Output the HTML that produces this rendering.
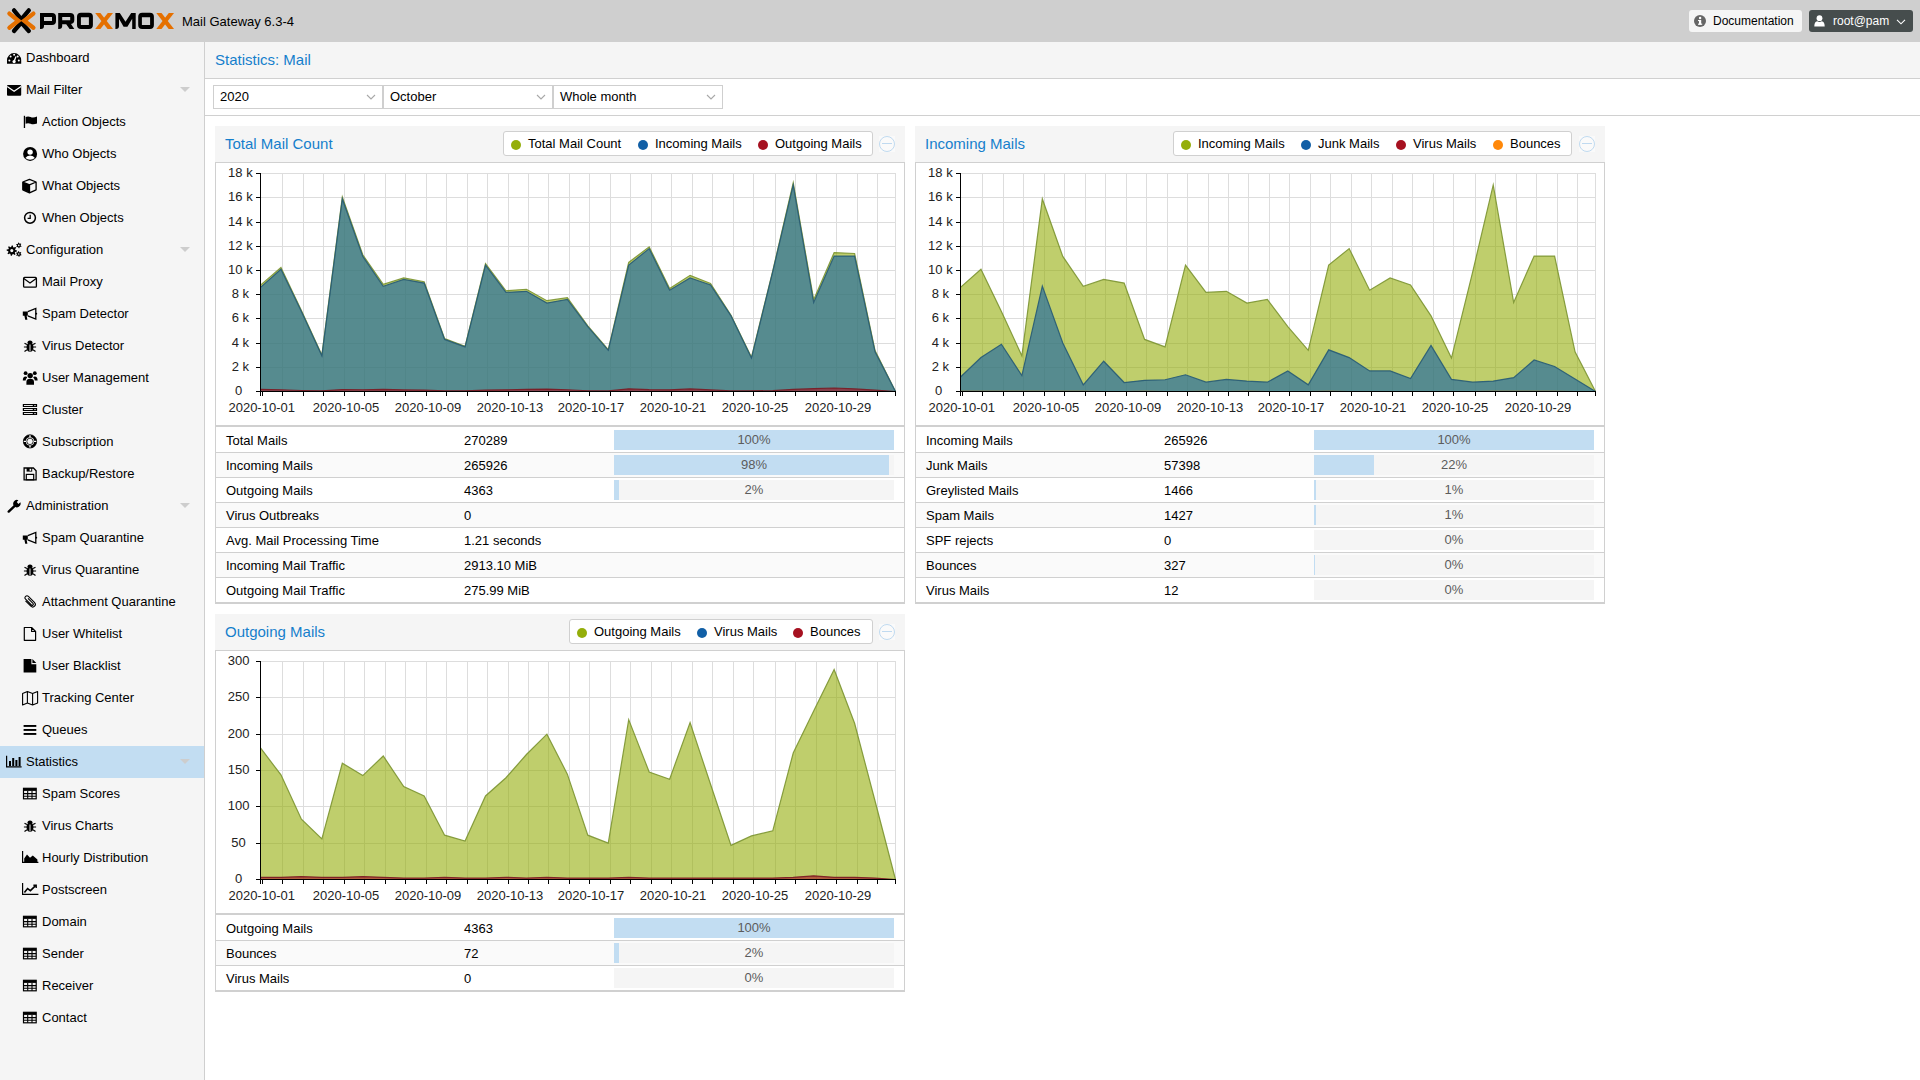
<!DOCTYPE html><html><head><meta charset="utf-8"><style>
*{box-sizing:border-box;margin:0;padding:0}
body{width:1920px;height:1080px;overflow:hidden;background:#fff;font-family:"Liberation Sans",sans-serif;font-size:13px;color:#000;position:relative}
.abs{position:absolute}
#hdr{left:0;top:0;width:1920px;height:42px;background:#cfcfcf}
#nav{left:0;top:42px;width:205px;height:1038px;background:#f5f5f5;border-right:1px solid #cfcfcf}
.ni{position:absolute;left:0;width:204px;height:32px;line-height:32px;white-space:nowrap}
.ni.sel{background:#c2ddf2}
.ni .t{position:absolute;top:0}
.ni svg{position:absolute}
.chev{position:absolute;left:180px;top:13px;width:0;height:0;border-left:5px solid transparent;border-right:5px solid transparent;border-top:5px solid #cdcdcd}
#ttl{left:205px;top:42px;width:1715px;height:37px;background:#f5f5f5;border-bottom:1px solid #d0d0d0}
#ttl span{position:absolute;left:10px;top:9px;color:#157fcc;font-size:15px;line-height:18px}
#tb{left:205px;top:79px;width:1715px;height:37px;background:#fff;border-bottom:1px solid #d0d0d0}
.combo{position:absolute;top:6px;width:170px;height:24px;border:1px solid #cfcfcf;background:#fff}
.combo span{position:absolute;left:6px;top:3px;line-height:15px}
.combo svg{position:absolute;right:6px;top:7.5px}
.pnl{position:absolute;width:690px;background:#fff}
.ph{position:absolute;left:0;top:0;width:690px;height:36px;background:#f5f5f5}
.ph .pt{position:absolute;left:10px;top:9px;color:#157fcc;font-size:15px;line-height:18px;white-space:nowrap}
.leg{position:absolute;top:5px;height:25px;background:#fff;border:1px solid #d0d0d0;border-radius:3px;white-space:nowrap}
.leg .it{position:absolute;top:4px;line-height:15px}
.leg .dot{position:absolute;top:4px;width:10px;height:10px;border-radius:50%}
.tool{position:absolute;top:10px;width:16px;height:16px;border:1px solid #c0daf0;border-radius:50%}
.tool:after{content:"";position:absolute;left:2px;top:6px;width:10px;height:1px;background:#c0daf0}
.toolbg{position:absolute;top:10px;width:16px;height:16px;background:#fafafa}
.pb{position:absolute;left:0;top:36px;width:690px;border:1px solid #d0d0d0}
.row{position:absolute;left:1px;width:688px;height:25px;border-bottom:1px solid #d0d0d0}
.row.alt{background:#fafafa}
.row .c1{position:absolute;left:10px;top:5px;line-height:15px}
.row .c2{position:absolute;left:248px;top:5px;line-height:15px}
.bar{position:absolute;left:398px;top:2px;width:280px;height:20px;background:#f5f5f5}
.bar .f{position:absolute;left:0;top:0;height:20px;background:#c2ddf2}
.bar .tx{position:absolute;left:0;top:2px;width:280px;text-align:center;line-height:15px;color:#5c5c5c}
</style></head><body><div id="hdr" class="abs"><svg class="abs" style="left:0;top:0" width="180" height="42" viewBox="0 0 180 42">
<g fill="none" stroke-linecap="round" stroke-linejoin="miter" stroke-width="4.3">
<path d="M14 10.4 L21.3 19.3 L28.8 10.4" stroke="#000"/>
<path d="M14 31 L21.3 22.6 L28.8 31" stroke="#000"/>
<path d="M9.4 13.6 L18.4 20.8 L9.4 27.8" stroke="#e57000"/>
<path d="M33.4 13.6 L24.2 20.8 L33.4 27.8" stroke="#e57000"/>
</g>
<g fill="#000" fill-rule="evenodd">
<path d="M40 13 H52 Q56 13 56 17 V21 Q56 25 52 25 H44 V26 Q44 29 41 29 H40 Z M44 17 V21 H52 V17 Z"/>
<path d="M58.2 13 H70.2 Q74.3 13 74.3 17 V20 Q74.3 23.6 71 24 L74.3 28.9 H69.6 L66.2 24.2 H62.2 V26 Q62.2 29 59 29 H58.2 Z M62.2 17 V20.2 H70.2 V17 Z"/>
<path d="M81 12.8 H88.9 Q92.9 12.8 92.9 16.8 V25 Q92.9 29 88.9 29 H81 Q77 29 77 25 V16.8 Q77 12.8 81 12.8 Z M80.9 17.2 V25 H88.9 V17.2 Z"/>
<path d="M115.4 29 V12.9 H119.8 L125.5 21.8 L131.2 12.9 H135.7 V29 H132.2 V18.8 L127.4 26.8 H123.6 L119 18.8 V26 Q119 29 116 29 Z"/>
<path d="M142.2 12.8 H149.9 Q153.9 12.8 153.9 16.8 V25 Q153.9 29 149.9 29 H142.2 Q138.2 29 138.2 25 V16.8 Q138.2 12.8 142.2 12.8 Z M141.9 17.3 V25 H150.1 V17.3 Z"/>
</g>
<g fill="#e57000">
<path d="M95.2 12.9 H100.4 L113 28.9 H107.6 Z"/>
<path d="M107.8 12.9 H113 L100.4 28.9 H95.2 Z"/>
<path d="M156.3 12.9 H161.5 L174 28.9 H168.7 Z"/>
<path d="M168.8 12.9 H174 L161.5 28.9 H156.3 Z"/>
</g></svg><span class="abs" style="left:182px;top:14px;font-size:13px;line-height:16px;color:#000">Mail Gateway 6.3-4</span><div class="abs" style="left:1689px;top:10px;width:113px;height:22px;background:#f5f5f5;border-radius:3px"><svg class="abs" style="left:5px;top:5px" width="12" height="12" viewBox="0 0 12 12"><circle cx="6" cy="6" r="6" fill="#666"/><rect x="5" y="5" width="2.2" height="4.5" fill="#fff"/><rect x="4" y="8.6" width="4.2" height="1.2" fill="#fff"/><rect x="4" y="5" width="1.5" height="1.1" fill="#fff"/><circle cx="6.1" cy="3" r="1.2" fill="#fff"/></svg><span class="abs" style="left:24px;top:4px;font-size:12px;line-height:14px;color:#000">Documentation</span></div><div class="abs" style="left:1809px;top:10px;width:104px;height:22px;background:#464d4d;border-radius:3px"><svg class="abs" style="left:5px;top:5px" width="12" height="12" viewBox="0 0 12 12"><circle cx="5.5" cy="3.2" r="2.9" fill="#fff"/><path d="M0.3 11.5 Q0.3 6.6 3.2 6.2 Q5.5 7.6 7.8 6.2 Q10.7 6.6 10.7 11.5 Z" fill="#fff"/></svg><span class="abs" style="left:24px;top:4px;font-size:12px;line-height:14px;color:#fff">root@pam</span><svg class="abs" style="left:87px;top:9px" width="10" height="6" viewBox="0 0 10 6"><path d="M1 0.8 L5 4.8 L9 0.8" fill="none" stroke="#fff" stroke-width="1.1"/></svg></div></div><div id="nav" class="abs"><div class="ni" style="top:0px"><svg style="left:6px;top:8px" width="17" height="16" viewBox="0 0 17 16"><path d="M1,13.8 V10.2 A7.1,7.1 0 0 1 15.2,10.2 V13.8 Z" fill="#000"/><g fill="#fff"><circle cx="3.4" cy="10.6" r="1"/><circle cx="4.6" cy="6.4" r="1"/><circle cx="8.1" cy="4.7" r="1"/><circle cx="11.7" cy="6.4" r="1"/><circle cx="12.8" cy="10.6" r="1"/><circle cx="8.1" cy="11.6" r="1.6"/></g><path d="M8.1,11.6 L10,6.6" stroke="#fff" stroke-width="1.3"/></svg><span class="t" style="left:26px">Dashboard</span></div><div class="ni" style="top:32px"><svg style="left:6px;top:8px" width="17" height="16" viewBox="0 0 17 16"><rect x="1" y="3" width="14.2" height="10.8" rx="1" fill="#000"/><path d="M1.2,4.6 L8.1,9.2 L15,4.6" fill="none" stroke="#fff" stroke-width="1.2"/></svg><span class="t" style="left:26px">Mail Filter</span><div class="chev"></div></div><div class="ni" style="top:64px"><svg style="left:22px;top:8px" width="17" height="16" viewBox="0 0 17 16"><rect x="1.8" y="1.8" width="1.3" height="12.2" fill="#000"/><path d="M3.6,3 Q6,1.8 8.6,3 Q11.2,4.2 15,2.6 V9.6 Q11.2,11 8.6,9.8 Q6,8.6 3.6,9.8 Z" fill="#000"/></svg><span class="t" style="left:42px">Action Objects</span></div><div class="ni" style="top:96px"><svg style="left:22px;top:8px" width="17" height="16" viewBox="0 0 17 16"><circle cx="8.1" cy="7.9" r="7" fill="#000"/><circle cx="8.1" cy="6.1" r="2.7" fill="#fff"/><path d="M3.4,11.9 Q4.6,9.4 8.1,9.4 Q11.6,9.4 12.8,11.9 Q11,13.7 8.1,13.7 Q5.2,13.7 3.4,11.9 Z" fill="#fff"/></svg><span class="t" style="left:42px">Who Objects</span></div><div class="ni" style="top:128px"><svg style="left:22px;top:8px" width="17" height="16" viewBox="0 0 17 16"><path d="M0.8,4 L7.5,6.8 L7.5,14.8 L0.8,11.8 Z" fill="#000"/><path d="M7.5,1.4 L14.1,4 L14.1,11.8 L7.5,14.8 L0.8,11.8 L0.8,4 Z M0.8,4 L7.5,6.8 L14.1,4 M7.5,6.8 V14.8" fill="none" stroke="#000" stroke-width="1.3" stroke-linejoin="round"/></svg><span class="t" style="left:42px">What Objects</span></div><div class="ni" style="top:160px"><svg style="left:22px;top:8px" width="17" height="16" viewBox="0 0 17 16"><circle cx="8" cy="7.8" r="5.4" fill="none" stroke="#000" stroke-width="1.5"/><path d="M8.2,4.8 V8.4 H5.6" fill="none" stroke="#000" stroke-width="1.3"/></svg><span class="t" style="left:42px">When Objects</span></div><div class="ni" style="top:192px"><svg style="left:6px;top:8px" width="17" height="16" viewBox="0 0 17 16"><path fill="#000" fill-rule="evenodd" d="M11.00,8.60 L10.90,9.61 L9.13,9.98 L8.79,10.60 L9.48,12.28 L8.69,12.92 L7.18,11.93 L6.50,12.13 L5.80,13.80 L4.79,13.70 L4.42,11.93 L3.80,11.59 L2.12,12.28 L1.48,11.49 L2.47,9.98 L2.27,9.30 L0.60,8.60 L0.70,7.59 L2.47,7.22 L2.81,6.60 L2.12,4.92 L2.91,4.28 L4.42,5.27 L5.10,5.07 L5.80,3.40 L6.81,3.50 L7.18,5.27 L7.80,5.61 L9.48,4.92 L10.12,5.71 L9.13,7.22 L9.33,7.90 Z M4.20,8.60 a1.60,1.60 0 1,0 3.20,0 a1.60,1.60 0 1,0 -3.20,0 Z"/><path fill="#000" fill-rule="evenodd" d="M15.47,4.23 L15.17,4.89 L14.09,4.79 L13.69,5.08 L13.42,6.13 L12.69,6.20 L12.24,5.22 L11.79,5.01 L10.75,5.30 L10.32,4.71 L10.95,3.82 L10.90,3.33 L10.13,2.57 L10.43,1.91 L11.51,2.01 L11.91,1.72 L12.18,0.67 L12.91,0.60 L13.36,1.58 L13.81,1.79 L14.85,1.50 L15.28,2.09 L14.65,2.98 L14.70,3.47 Z M12.00,3.40 a0.80,0.80 0 1,0 1.60,0 a0.80,0.80 0 1,0 -1.60,0 Z"/><path fill="#000" fill-rule="evenodd" d="M15.47,12.83 L15.17,13.49 L14.09,13.39 L13.69,13.68 L13.42,14.73 L12.69,14.80 L12.24,13.82 L11.79,13.61 L10.75,13.90 L10.32,13.31 L10.95,12.42 L10.90,11.93 L10.13,11.17 L10.43,10.51 L11.51,10.61 L11.91,10.32 L12.18,9.27 L12.91,9.20 L13.36,10.18 L13.81,10.39 L14.85,10.10 L15.28,10.69 L14.65,11.58 L14.70,12.07 Z M12.00,12.00 a0.80,0.80 0 1,0 1.60,0 a0.80,0.80 0 1,0 -1.60,0 Z"/></svg><span class="t" style="left:26px">Configuration</span><div class="chev"></div></div><div class="ni" style="top:224px"><svg style="left:22px;top:8px" width="17" height="16" viewBox="0 0 17 16"><rect x="1.6" y="3.4" width="12.8" height="9.8" rx="1" fill="none" stroke="#000" stroke-width="1.3"/><path d="M1.8,4.4 L8,9 L14.2,4.4" fill="none" stroke="#000" stroke-width="1.2"/></svg><span class="t" style="left:42px">Mail Proxy</span></div><div class="ni" style="top:256px"><svg style="left:22px;top:8px" width="17" height="16" viewBox="0 0 17 16"><path d="M0.8,5.4 H5.8 V9.8 H4.6 L5.4,13.8 H3.2 L2.4,9.8 H0.8 Z" fill="#000"/><path d="M5.8,5.6 L13.8,2.4 V13 L5.8,9.8" fill="none" stroke="#000" stroke-width="1.3"/><circle cx="14.3" cy="7.7" r="0.9" fill="#000"/></svg><span class="t" style="left:42px">Spam Detector</span></div><div class="ni" style="top:288px"><svg style="left:22px;top:8px" width="17" height="16" viewBox="0 0 17 16"><ellipse cx="8" cy="9.2" rx="3.4" ry="4.6" fill="#000"/><path d="M5.4,5 A2.6,2.6 0 0 1 10.6,5 Z" fill="#000"/><path d="M1.9,9 H14.1 M2.5,5.2 L5,6.6 M13.5,5.2 L11,6.6 M2.5,13.6 L5,11.8 M13.5,13.6 L11,11.8" stroke="#000" stroke-width="1.2"/><path d="M8,6.5 V13.2" stroke="#fff" stroke-width="0.9"/></svg><span class="t" style="left:42px">Virus Detector</span></div><div class="ni" style="top:320px"><svg style="left:22px;top:8px" width="17" height="16" viewBox="0 0 17 16"><circle cx="8.2" cy="5.6" r="2.7" fill="#000"/><path d="M4.4,14.7 V12 Q4.4,8.8 8.2,8.8 Q12,8.8 12,12 V14.7 Z" fill="#000"/><circle cx="3.6" cy="3.2" r="1.9" fill="#000"/><circle cx="12.8" cy="3.2" r="1.9" fill="#000"/><path d="M0.8,10.5 Q0.8,6.6 3.6,6.6 Q4.8,6.6 5.2,7.4 Q3.6,8.6 3.6,10.5 Z M15.6,10.5 Q15.6,6.6 12.8,6.6 Q11.6,6.6 11.2,7.4 Q12.8,8.6 12.8,10.5 Z" fill="#000"/></svg><span class="t" style="left:42px">User Management</span></div><div class="ni" style="top:352px"><svg style="left:22px;top:8px" width="17" height="16" viewBox="0 0 17 16"><g fill="#000"><rect x="0.8" y="2" width="14.3" height="3" /><rect x="0.8" y="6" width="14.3" height="3"/><rect x="0.8" y="10" width="14.3" height="3"/></g><g fill="#fff"><rect x="2" y="3.1" width="8.8" height="0.9"/><rect x="2" y="7.1" width="8.8" height="0.9"/><rect x="2" y="11.1" width="8.8" height="0.9"/><rect x="12.4" y="3" width="1.2" height="1.1"/><rect x="12.4" y="7" width="1.2" height="1.1"/><rect x="12.4" y="11" width="1.2" height="1.1"/></g></svg><span class="t" style="left:42px">Cluster</span></div><div class="ni" style="top:384px"><svg style="left:22px;top:8px" width="17" height="16" viewBox="0 0 17 16"><circle cx="8" cy="7.4" r="5.4" fill="none" stroke="#000" stroke-width="2.6"/><path d="M8,0.7 V3.4 M8,11.4 V14 M1.3,7.4 H4 M12,7.4 H14.7" stroke="#fff" stroke-width="1.4"/><circle cx="8" cy="7.4" r="6.6" fill="none" stroke="#000" stroke-width="0.8"/><circle cx="8" cy="7.4" r="3.2" fill="none" stroke="#000" stroke-width="0.8"/></svg><span class="t" style="left:42px">Subscription</span></div><div class="ni" style="top:416px"><svg style="left:22px;top:8px" width="17" height="16" viewBox="0 0 17 16"><path d="M2.1,2 H11.4 L14.1,4.7 V13.8 H2.1 Z" fill="none" stroke="#000" stroke-width="1.3"/><rect x="4.6" y="2" width="5.6" height="3.6" fill="#000"/><rect x="7.6" y="2.8" width="1.6" height="2" fill="#fff"/><rect x="4.3" y="8.4" width="7.4" height="5.4" fill="none" stroke="#000" stroke-width="1.2"/></svg><span class="t" style="left:42px">Backup/Restore</span></div><div class="ni" style="top:448px"><svg style="left:6px;top:8px" width="17" height="16" viewBox="0 0 17 16"><path d="M2.7,13.6 L9,7.6" stroke="#000" stroke-width="2.4" stroke-linecap="round"/><path d="M8.2,8.3 A3.8,3.8 0 0 1 12.4,2.2 L10.8,4.1 L12.4,6 L14.4,4.3 A3.8,3.8 0 0 1 8.2,8.3 Z" fill="#000"/></svg><span class="t" style="left:26px">Administration</span><div class="chev"></div></div><div class="ni" style="top:480px"><svg style="left:22px;top:8px" width="17" height="16" viewBox="0 0 17 16"><path d="M0.8,5.4 H5.8 V9.8 H4.6 L5.4,13.8 H3.2 L2.4,9.8 H0.8 Z" fill="#000"/><path d="M5.8,5.6 L13.8,2.4 V13 L5.8,9.8" fill="none" stroke="#000" stroke-width="1.3"/><circle cx="14.3" cy="7.7" r="0.9" fill="#000"/></svg><span class="t" style="left:42px">Spam Quarantine</span></div><div class="ni" style="top:512px"><svg style="left:22px;top:8px" width="17" height="16" viewBox="0 0 17 16"><ellipse cx="8" cy="9.2" rx="3.4" ry="4.6" fill="#000"/><path d="M5.4,5 A2.6,2.6 0 0 1 10.6,5 Z" fill="#000"/><path d="M1.9,9 H14.1 M2.5,5.2 L5,6.6 M13.5,5.2 L11,6.6 M2.5,13.6 L5,11.8 M13.5,13.6 L11,11.8" stroke="#000" stroke-width="1.2"/><path d="M8,6.5 V13.2" stroke="#fff" stroke-width="0.9"/></svg><span class="t" style="left:42px">Virus Quarantine</span></div><div class="ni" style="top:544px"><svg style="left:22px;top:8px" width="17" height="16" viewBox="0 0 17 16"><path transform="translate(16,0) scale(-1,1)" d="M12.5,6.8 L7.2,12.2 Q5.2,14 3.4,12.2 Q1.6,10.4 3.6,8.4 L9.6,2.4 Q11,1 12.4,2.4 Q13.8,3.8 12.4,5.2 L6.6,11 Q5.8,11.8 5,11 Q4.2,10.2 5,9.4 L10,4.4" fill="none" stroke="#000" stroke-width="1.1"/></svg><span class="t" style="left:42px">Attachment Quarantine</span></div><div class="ni" style="top:576px"><svg style="left:22px;top:8px" width="17" height="16" viewBox="0 0 17 16"><path d="M2.3,1.5 H9.6 L13.6,5.5 V14.3 H2.3 Z M9.6,1.5 V5.5 H13.6" fill="none" stroke="#000" stroke-width="1.2" stroke-linejoin="round"/></svg><span class="t" style="left:42px">User Whitelist</span></div><div class="ni" style="top:608px"><svg style="left:22px;top:8px" width="17" height="16" viewBox="0 0 17 16"><path d="M1.6,1 H9.4 V6.2 H14.3 V14.6 H1.6 Z M10.4,1 L14.3,5 H10.4 Z" fill="#000"/></svg><span class="t" style="left:42px">User Blacklist</span></div><div class="ni" style="top:640px"><svg style="left:22px;top:8px" width="17" height="16" viewBox="0 0 17 16"><path d="M0.6,3.6 L5.4,1.6 L10.6,3.6 L15.6,1.6 V13 L10.6,15 L5.4,13 L0.6,15 Z M5.4,1.6 V13 M10.6,3.6 V15" fill="none" stroke="#000" stroke-width="1.1" stroke-linejoin="round"/></svg><span class="t" style="left:42px">Tracking Center</span></div><div class="ni" style="top:672px"><svg style="left:22px;top:8px" width="17" height="16" viewBox="0 0 17 16"><g fill="#000"><rect x="1.6" y="3" width="12.7" height="1.9"/><rect x="1.6" y="7" width="12.7" height="1.9"/><rect x="1.6" y="11" width="12.7" height="1.9"/></g></svg><span class="t" style="left:42px">Queues</span></div><div class="ni sel" style="top:704px"><svg style="left:6px;top:8px" width="17" height="16" viewBox="0 0 17 16"><path d="M0.6,1.8 V12.8 H15.6" fill="none" stroke="#000" stroke-width="1.2"/><g fill="#000"><rect x="3" y="7" width="2" height="5"/><rect x="6.2" y="4" width="2" height="8"/><rect x="9.4" y="6" width="2" height="6"/><rect x="12.6" y="3" width="2" height="9"/></g></svg><span class="t" style="left:26px">Statistics</span><div class="chev"></div></div><div class="ni" style="top:736px"><svg style="left:22px;top:8px" width="17" height="16" viewBox="0 0 17 16"><rect x="1.5" y="2.3" width="12.7" height="10.5" fill="none" stroke="#000" stroke-width="1.2"/><rect x="1.5" y="2.3" width="12.7" height="2.6" fill="#000"/><path d="M1.5,7.6 H14.2 M1.5,10.2 H14.2 M5.7,4.9 V12.8 M10,4.9 V12.8" stroke="#000" stroke-width="1.1"/></svg><span class="t" style="left:42px">Spam Scores</span></div><div class="ni" style="top:768px"><svg style="left:22px;top:8px" width="17" height="16" viewBox="0 0 17 16"><ellipse cx="8" cy="9.2" rx="3.4" ry="4.6" fill="#000"/><path d="M5.4,5 A2.6,2.6 0 0 1 10.6,5 Z" fill="#000"/><path d="M1.9,9 H14.1 M2.5,5.2 L5,6.6 M13.5,5.2 L11,6.6 M2.5,13.6 L5,11.8 M13.5,13.6 L11,11.8" stroke="#000" stroke-width="1.2"/><path d="M8,6.5 V13.2" stroke="#fff" stroke-width="0.9"/></svg><span class="t" style="left:42px">Virus Charts</span></div><div class="ni" style="top:800px"><svg style="left:22px;top:8px" width="17" height="16" viewBox="0 0 17 16"><path d="M0.6,1 V12.4 H16.4" fill="none" stroke="#000" stroke-width="1.2"/><path d="M2.2,12 V8.4 L5,4.6 L8,7.8 L10.8,5.4 L15.4,9.4 V12 Z" fill="#000"/></svg><span class="t" style="left:42px">Hourly Distribution</span></div><div class="ni" style="top:832px"><svg style="left:22px;top:8px" width="17" height="16" viewBox="0 0 17 16"><path d="M0.6,1 V12.4 H16.4" fill="none" stroke="#000" stroke-width="1.2"/><path d="M2.4,10.4 L5.6,6.6 L8.4,8.6 L13.6,3.6" fill="none" stroke="#000" stroke-width="1.6"/><path d="M11.4,3.2 H14.2 V6" fill="none" stroke="#000" stroke-width="1.4"/></svg><span class="t" style="left:42px">Postscreen</span></div><div class="ni" style="top:864px"><svg style="left:22px;top:8px" width="17" height="16" viewBox="0 0 17 16"><rect x="1.5" y="2.3" width="12.7" height="10.5" fill="none" stroke="#000" stroke-width="1.2"/><rect x="1.5" y="2.3" width="12.7" height="2.6" fill="#000"/><path d="M1.5,7.6 H14.2 M1.5,10.2 H14.2 M5.7,4.9 V12.8 M10,4.9 V12.8" stroke="#000" stroke-width="1.1"/></svg><span class="t" style="left:42px">Domain</span></div><div class="ni" style="top:896px"><svg style="left:22px;top:8px" width="17" height="16" viewBox="0 0 17 16"><rect x="1.5" y="2.3" width="12.7" height="10.5" fill="none" stroke="#000" stroke-width="1.2"/><rect x="1.5" y="2.3" width="12.7" height="2.6" fill="#000"/><path d="M1.5,7.6 H14.2 M1.5,10.2 H14.2 M5.7,4.9 V12.8 M10,4.9 V12.8" stroke="#000" stroke-width="1.1"/></svg><span class="t" style="left:42px">Sender</span></div><div class="ni" style="top:928px"><svg style="left:22px;top:8px" width="17" height="16" viewBox="0 0 17 16"><rect x="1.5" y="2.3" width="12.7" height="10.5" fill="none" stroke="#000" stroke-width="1.2"/><rect x="1.5" y="2.3" width="12.7" height="2.6" fill="#000"/><path d="M1.5,7.6 H14.2 M1.5,10.2 H14.2 M5.7,4.9 V12.8 M10,4.9 V12.8" stroke="#000" stroke-width="1.1"/></svg><span class="t" style="left:42px">Receiver</span></div><div class="ni" style="top:960px"><svg style="left:22px;top:8px" width="17" height="16" viewBox="0 0 17 16"><rect x="1.5" y="2.3" width="12.7" height="10.5" fill="none" stroke="#000" stroke-width="1.2"/><rect x="1.5" y="2.3" width="12.7" height="2.6" fill="#000"/><path d="M1.5,7.6 H14.2 M1.5,10.2 H14.2 M5.7,4.9 V12.8 M10,4.9 V12.8" stroke="#000" stroke-width="1.1"/></svg><span class="t" style="left:42px">Contact</span></div></div><div id="ttl" class="abs"><span>Statistics: Mail</span></div><div id="tb" class="abs"><div class="combo" style="left:8px"><span>2020</span><svg width="10" height="7" viewBox="0 0 10 7"><path d="M1 1 L5 5 L9 1" fill="none" stroke="#a8a8a8" stroke-width="1.1"/></svg></div><div class="combo" style="left:178px"><span>October</span><svg width="10" height="7" viewBox="0 0 10 7"><path d="M1 1 L5 5 L9 1" fill="none" stroke="#a8a8a8" stroke-width="1.1"/></svg></div><div class="combo" style="left:348px"><span>Whole month</span><svg width="10" height="7" viewBox="0 0 10 7"><path d="M1 1 L5 5 L9 1" fill="none" stroke="#a8a8a8" stroke-width="1.1"/></svg></div></div><div class="pnl" style="left:215px;top:126px;height:478px"><div class="ph"><span class="pt">Total Mail Count</span><div class="leg" style="left:288px;width:370px"><span class="dot" style="left:7px;top:8px;background:#94ae0a"></span><span class="it" style="left:24px">Total Mail Count</span><span class="dot" style="left:134px;top:8px;background:#115fa6"></span><span class="it" style="left:151px">Incoming Mails</span><span class="dot" style="left:254px;top:8px;background:#a61120"></span><span class="it" style="left:271px">Outgoing Mails</span></div><div class="toolbg" style="left:664px"></div><div class="tool" style="left:664px"></div></div><div class="abs" style="left:0;top:36px;width:690px;height:1px;background:#d0d0d0"></div><div class="abs" style="left:0;top:36px;width:1px;height:442px;background:#d0d0d0"></div><div class="abs" style="left:689px;top:36px;width:1px;height:442px;background:#d0d0d0"></div><div class="abs" style="left:0;top:477px;width:690px;height:1px;background:#d0d0d0"></div><div class="abs" style="left:0;top:299px;width:690px;height:2px;background:#d0d0d0"></div><div class="row" style="top:302px"><span class="c1">Total Mails</span><span class="c2">270289</span><div class="bar"><div class="f" style="width:280.0px"></div><span class="tx">100%</span></div></div><div class="row alt" style="top:327px"><span class="c1">Incoming Mails</span><span class="c2">265926</span><div class="bar"><div class="f" style="width:275.0px"></div><span class="tx">98%</span></div></div><div class="row" style="top:352px"><span class="c1">Outgoing Mails</span><span class="c2">4363</span><div class="bar"><div class="f" style="width:5.0px"></div><span class="tx">2%</span></div></div><div class="row alt" style="top:377px"><span class="c1">Virus Outbreaks</span><span class="c2">0</span></div><div class="row" style="top:402px"><span class="c1">Avg. Mail Processing Time</span><span class="c2">1.21 seconds</span></div><div class="row alt" style="top:427px"><span class="c1">Incoming Mail Traffic</span><span class="c2">2913.10 MiB</span></div><div class="row" style="top:452px"><span class="c1">Outgoing Mail Traffic</span><span class="c2">275.99 MiB</span></div></div><div class="pnl" style="left:915px;top:126px;height:478px"><div class="ph"><span class="pt">Incoming Mails</span><div class="leg" style="left:258px;width:399px"><span class="dot" style="left:7px;top:8px;background:#94ae0a"></span><span class="it" style="left:24px">Incoming Mails</span><span class="dot" style="left:127px;top:8px;background:#115fa6"></span><span class="it" style="left:144px">Junk Mails</span><span class="dot" style="left:222px;top:8px;background:#a61120"></span><span class="it" style="left:239px">Virus Mails</span><span class="dot" style="left:319px;top:8px;background:#ff8809"></span><span class="it" style="left:336px">Bounces</span></div><div class="toolbg" style="left:664px"></div><div class="tool" style="left:664px"></div></div><div class="abs" style="left:0;top:36px;width:690px;height:1px;background:#d0d0d0"></div><div class="abs" style="left:0;top:36px;width:1px;height:442px;background:#d0d0d0"></div><div class="abs" style="left:689px;top:36px;width:1px;height:442px;background:#d0d0d0"></div><div class="abs" style="left:0;top:477px;width:690px;height:1px;background:#d0d0d0"></div><div class="abs" style="left:0;top:299px;width:690px;height:2px;background:#d0d0d0"></div><div class="row" style="top:302px"><span class="c1">Incoming Mails</span><span class="c2">265926</span><div class="bar"><div class="f" style="width:280.0px"></div><span class="tx">100%</span></div></div><div class="row alt" style="top:327px"><span class="c1">Junk Mails</span><span class="c2">57398</span><div class="bar"><div class="f" style="width:60.4px"></div><span class="tx">22%</span></div></div><div class="row" style="top:352px"><span class="c1">Greylisted Mails</span><span class="c2">1466</span><div class="bar"><div class="f" style="width:1.6px"></div><span class="tx">1%</span></div></div><div class="row alt" style="top:377px"><span class="c1">Spam Mails</span><span class="c2">1427</span><div class="bar"><div class="f" style="width:1.6px"></div><span class="tx">1%</span></div></div><div class="row" style="top:402px"><span class="c1">SPF rejects</span><span class="c2">0</span><div class="bar"><div class="f" style="width:0.0px"></div><span class="tx">0%</span></div></div><div class="row alt" style="top:427px"><span class="c1">Bounces</span><span class="c2">327</span><div class="bar"><div class="f" style="width:0.5px"></div><span class="tx">0%</span></div></div><div class="row" style="top:452px"><span class="c1">Virus Mails</span><span class="c2">12</span><div class="bar"><div class="f" style="width:0.0px"></div><span class="tx">0%</span></div></div></div><div class="pnl" style="left:215px;top:614px;height:378px"><div class="ph"><span class="pt">Outgoing Mails</span><div class="leg" style="left:354px;width:304px"><span class="dot" style="left:7px;top:8px;background:#94ae0a"></span><span class="it" style="left:24px">Outgoing Mails</span><span class="dot" style="left:127px;top:8px;background:#115fa6"></span><span class="it" style="left:144px">Virus Mails</span><span class="dot" style="left:223px;top:8px;background:#a61120"></span><span class="it" style="left:240px">Bounces</span></div><div class="toolbg" style="left:664px"></div><div class="tool" style="left:664px"></div></div><div class="abs" style="left:0;top:36px;width:690px;height:1px;background:#d0d0d0"></div><div class="abs" style="left:0;top:36px;width:1px;height:342px;background:#d0d0d0"></div><div class="abs" style="left:689px;top:36px;width:1px;height:342px;background:#d0d0d0"></div><div class="abs" style="left:0;top:377px;width:690px;height:1px;background:#d0d0d0"></div><div class="abs" style="left:0;top:299px;width:690px;height:2px;background:#d0d0d0"></div><div class="row" style="top:302px"><span class="c1">Outgoing Mails</span><span class="c2">4363</span><div class="bar"><div class="f" style="width:280.0px"></div><span class="tx">100%</span></div></div><div class="row alt" style="top:327px"><span class="c1">Bounces</span><span class="c2">72</span><div class="bar"><div class="f" style="width:5.0px"></div><span class="tx">2%</span></div></div><div class="row" style="top:352px"><span class="c1">Virus Mails</span><span class="c2">0</span><div class="bar"><div class="f" style="width:0.0px"></div><span class="tx">0%</span></div></div></div><svg width="1920" height="1080" style="position:absolute;left:0px;top:0px;overflow:visible"><path d="M261,367.5H896M261,343.5H896M261,318.5H896M261,294.5H896M261,270.5H896M261,246.5H896M261,222.5H896M261,197.5H896M261,173.5H896M282.5,173V391M303.5,173V391M323.5,173V391M344.5,173V391M364.5,173V391M385.5,173V391M405.5,173V391M426.5,173V391M446.5,173V391M467.5,173V391M487.5,173V391M508.5,173V391M528.5,173V391M548.5,173V391M569.5,173V391M589.5,173V391M610.5,173V391M630.5,173V391M651.5,173V391M671.5,173V391M692.5,173V391M712.5,173V391M733.5,173V391M753.5,173V391M775.5,173V391M795.5,173V391M816.5,173V391M836.5,173V391M857.5,173V391M877.5,173V391M895.5,173V391" stroke="#dddddd" stroke-width="1" fill="none"/><path d="M260.50,391.50 L260.50,285.15 L280.96,267.43 L301.41,310.56 L321.87,355.09 L342.33,197.00 L362.78,254.73 L383.24,284.32 L403.69,277.92 L424.15,281.71 L444.61,338.68 L465.06,346.29 L485.52,263.67 L505.98,290.74 L526.43,289.26 L546.89,300.67 L567.35,297.70 L587.80,325.97 L608.26,349.72 L628.71,262.40 L649.17,246.80 L669.63,288.58 L690.08,275.34 L710.54,283.46 L731.00,315.24 L751.45,357.35 L772.76,270.79 L793.22,182.78 L813.67,299.67 L834.13,252.60 L854.59,253.49 L875.04,350.59 L895.50,391.50 L895.50,391.50 Z" fill="#94ae0a" fill-opacity="0.6" stroke="none"/><path d="M260.50,285.15 L280.96,267.43 L301.41,310.56 L321.87,355.09 L342.33,197.00 L362.78,254.73 L383.24,284.32 L403.69,277.92 L424.15,281.71 L444.61,338.68 L465.06,346.29 L485.52,263.67 L505.98,290.74 L526.43,289.26 L546.89,300.67 L567.35,297.70 L587.80,325.97 L608.26,349.72 L628.71,262.40 L649.17,246.80 L669.63,288.58 L690.08,275.34 L710.54,283.46 L731.00,315.24 L751.45,357.35 L772.76,270.79 L793.22,182.78 L813.67,299.67 L834.13,252.60 L854.59,253.49 L875.04,350.59 L895.50,391.50" fill="none" stroke="#7b9430" stroke-opacity="0.9" stroke-width="1.2" stroke-linejoin="miter" stroke-miterlimit="30"/><path d="M260.50,391.50 L260.50,287.34 L280.96,269.18 L301.41,311.57 L321.87,355.77 L342.33,198.93 L362.78,256.46 L383.24,286.38 L403.69,279.47 L424.15,283.11 L444.61,339.42 L465.06,346.93 L485.52,265.06 L505.98,292.43 L526.43,291.34 L546.89,303.09 L567.35,299.46 L587.80,326.71 L608.26,350.32 L628.71,265.06 L649.17,248.59 L669.63,290.25 L690.08,277.96 L710.54,285.04 L731.00,315.81 L751.45,358.07 L772.76,271.60 L793.22,184.88 L813.67,302.48 L834.13,256.10 L854.59,256.10 L875.04,351.90 L895.50,391.50 L895.50,391.50 Z" fill="#115fa6" fill-opacity="0.6" stroke="none"/><path d="M260.50,287.34 L280.96,269.18 L301.41,311.57 L321.87,355.77 L342.33,198.93 L362.78,256.46 L383.24,286.38 L403.69,279.47 L424.15,283.11 L444.61,339.42 L465.06,346.93 L485.52,265.06 L505.98,292.43 L526.43,291.34 L546.89,303.09 L567.35,299.46 L587.80,326.71 L608.26,350.32 L628.71,265.06 L649.17,248.59 L669.63,290.25 L690.08,277.96 L710.54,285.04 L731.00,315.81 L751.45,358.07 L772.76,271.60 L793.22,184.88 L813.67,302.48 L834.13,256.10 L854.59,256.10 L875.04,351.90 L895.50,391.50" fill="none" stroke="#265a76" stroke-opacity="0.9" stroke-width="1.2" stroke-linejoin="miter" stroke-miterlimit="30"/><path d="M260.50,391.50 L260.50,389.31 L280.96,389.76 L301.41,390.49 L321.87,390.82 L342.33,389.56 L362.78,389.77 L383.24,389.44 L403.69,389.95 L424.15,390.11 L444.61,390.76 L465.06,390.86 L485.52,390.11 L505.98,389.80 L526.43,389.42 L546.89,389.08 L567.35,389.74 L587.80,390.76 L608.26,390.89 L628.71,388.84 L649.17,389.71 L669.63,389.83 L690.08,388.88 L710.54,389.91 L731.00,390.93 L751.45,390.77 L772.76,390.69 L793.22,389.39 L813.67,388.69 L834.13,388.00 L854.59,388.90 L875.04,390.19 L895.50,391.50 L895.50,391.50 Z" fill="#a61120" fill-opacity="0.6" stroke="none"/><path d="M260.50,389.31 L280.96,389.76 L301.41,390.49 L321.87,390.82 L342.33,389.56 L362.78,389.77 L383.24,389.44 L403.69,389.95 L424.15,390.11 L444.61,390.76 L465.06,390.86 L485.52,390.11 L505.98,389.80 L526.43,389.42 L546.89,389.08 L567.35,389.74 L587.80,390.76 L608.26,390.89 L628.71,388.84 L649.17,389.71 L669.63,389.83 L690.08,388.88 L710.54,389.91 L731.00,390.93 L751.45,390.77 L772.76,390.69 L793.22,389.39 L813.67,388.69 L834.13,388.00 L854.59,388.90 L875.04,390.19 L895.50,391.50" fill="none" stroke="#7a1a22" stroke-opacity="0.9" stroke-width="1.2" stroke-linejoin="miter" stroke-miterlimit="30"/><path d="M260.5,173V396M256,391.5H896M256,391.5H260M256,367.5H260M256,343.5H260M256,318.5H260M256,294.5H260M256,270.5H260M256,246.5H260M256,222.5H260M256,197.5H260M256,173.5H260M262.5,392V396M282.5,392V396M303.5,392V396M323.5,392V396M344.5,392V396M364.5,392V396M385.5,392V396M405.5,392V396M426.5,392V396M446.5,392V396M467.5,392V396M487.5,392V396M508.5,392V396M528.5,392V396M548.5,392V396M569.5,392V396M589.5,392V396M610.5,392V396M630.5,392V396M651.5,392V396M671.5,392V396M692.5,392V396M712.5,392V396M733.5,392V396M753.5,392V396M775.5,392V396M795.5,392V396M816.5,392V396M836.5,392V396M857.5,392V396M877.5,392V396M895.5,392V396" stroke="#000" stroke-width="1" fill="none"/><g font-family='"Liberation Sans", sans-serif' font-size="13" fill="#222"><text x="238.6" y="395.0" text-anchor="middle">0</text><text x="240.4" y="371.0" text-anchor="middle">2 k</text><text x="240.4" y="347.0" text-anchor="middle">4 k</text><text x="240.4" y="322.0" text-anchor="middle">6 k</text><text x="240.4" y="298.0" text-anchor="middle">8 k</text><text x="240.4" y="274.0" text-anchor="middle">10 k</text><text x="240.4" y="250.0" text-anchor="middle">12 k</text><text x="240.4" y="226.0" text-anchor="middle">14 k</text><text x="240.4" y="201.0" text-anchor="middle">16 k</text><text x="240.4" y="177.0" text-anchor="middle">18 k</text><text x="261.7" y="412.0" text-anchor="middle">2020-10-01</text><text x="346.0" y="412.0" text-anchor="middle">2020-10-05</text><text x="428.0" y="412.0" text-anchor="middle">2020-10-09</text><text x="510.0" y="412.0" text-anchor="middle">2020-10-13</text><text x="591.0" y="412.0" text-anchor="middle">2020-10-17</text><text x="673.0" y="412.0" text-anchor="middle">2020-10-21</text><text x="755.0" y="412.0" text-anchor="middle">2020-10-25</text><text x="838.0" y="412.0" text-anchor="middle">2020-10-29</text></g></svg><svg width="1920" height="1080" style="position:absolute;left:700px;top:0px;overflow:visible"><path d="M261,367.5H896M261,343.5H896M261,318.5H896M261,294.5H896M261,270.5H896M261,246.5H896M261,222.5H896M261,197.5H896M261,173.5H896M282.5,173V391M303.5,173V391M323.5,173V391M344.5,173V391M364.5,173V391M385.5,173V391M405.5,173V391M426.5,173V391M446.5,173V391M467.5,173V391M487.5,173V391M508.5,173V391M528.5,173V391M548.5,173V391M569.5,173V391M589.5,173V391M610.5,173V391M630.5,173V391M651.5,173V391M671.5,173V391M692.5,173V391M712.5,173V391M733.5,173V391M753.5,173V391M775.5,173V391M795.5,173V391M816.5,173V391M836.5,173V391M857.5,173V391M877.5,173V391M895.5,173V391" stroke="#dddddd" stroke-width="1" fill="none"/><path d="M260.50,391.50 L260.50,287.34 L280.96,269.18 L301.41,311.57 L321.87,355.77 L342.33,198.93 L362.78,256.46 L383.24,286.38 L403.69,279.47 L424.15,283.11 L444.61,339.42 L465.06,346.93 L485.52,265.06 L505.98,292.43 L526.43,291.34 L546.89,303.09 L567.35,299.46 L587.80,326.71 L608.26,350.32 L628.71,265.06 L649.17,248.59 L669.63,290.25 L690.08,277.96 L710.54,285.04 L731.00,315.81 L751.45,358.07 L772.76,271.60 L793.22,184.88 L813.67,302.48 L834.13,256.10 L854.59,256.10 L875.04,351.90 L895.50,391.50 L895.50,391.50 Z" fill="#94ae0a" fill-opacity="0.6" stroke="none"/><path d="M260.50,287.34 L280.96,269.18 L301.41,311.57 L321.87,355.77 L342.33,198.93 L362.78,256.46 L383.24,286.38 L403.69,279.47 L424.15,283.11 L444.61,339.42 L465.06,346.93 L485.52,265.06 L505.98,292.43 L526.43,291.34 L546.89,303.09 L567.35,299.46 L587.80,326.71 L608.26,350.32 L628.71,265.06 L649.17,248.59 L669.63,290.25 L690.08,277.96 L710.54,285.04 L731.00,315.81 L751.45,358.07 L772.76,271.60 L793.22,184.88 L813.67,302.48 L834.13,256.10 L854.59,256.10 L875.04,351.90 L895.50,391.50" fill="none" stroke="#7b9430" stroke-opacity="0.9" stroke-width="1.2" stroke-linejoin="miter" stroke-miterlimit="30"/><path d="M260.50,391.50 L260.50,376.97 L280.96,357.59 L301.41,344.27 L321.87,375.51 L342.33,286.13 L362.78,343.06 L383.24,384.84 L403.69,361.22 L424.15,382.54 L444.61,380.36 L465.06,379.75 L485.52,374.79 L505.98,382.17 L526.43,379.39 L546.89,381.08 L567.35,382.17 L587.80,370.91 L608.26,384.84 L628.71,349.84 L649.17,357.59 L669.63,370.91 L690.08,370.91 L710.54,378.54 L731.00,345.48 L751.45,379.39 L772.76,382.17 L793.22,381.08 L813.67,377.69 L834.13,360.01 L854.59,366.55 L875.04,379.03 L895.50,391.50 L895.50,391.50 Z" fill="#115fa6" fill-opacity="0.6" stroke="none"/><path d="M260.50,376.97 L280.96,357.59 L301.41,344.27 L321.87,375.51 L342.33,286.13 L362.78,343.06 L383.24,384.84 L403.69,361.22 L424.15,382.54 L444.61,380.36 L465.06,379.75 L485.52,374.79 L505.98,382.17 L526.43,379.39 L546.89,381.08 L567.35,382.17 L587.80,370.91 L608.26,384.84 L628.71,349.84 L649.17,357.59 L669.63,370.91 L690.08,370.91 L710.54,378.54 L731.00,345.48 L751.45,379.39 L772.76,382.17 L793.22,381.08 L813.67,377.69 L834.13,360.01 L854.59,366.55 L875.04,379.03 L895.50,391.50" fill="none" stroke="#265a76" stroke-opacity="0.9" stroke-width="1.2" stroke-linejoin="miter" stroke-miterlimit="30"/><path d="M260.50,391.50 L260.50,391.50 L280.96,391.50 L301.41,391.50 L321.87,391.50 L342.33,391.50 L362.78,391.50 L383.24,391.50 L403.69,391.50 L424.15,391.50 L444.61,391.50 L465.06,391.50 L485.52,391.50 L505.98,391.50 L526.43,391.50 L546.89,391.50 L567.35,391.50 L587.80,391.50 L608.26,391.50 L628.71,391.50 L649.17,391.50 L669.63,391.50 L690.08,391.50 L710.54,391.50 L731.00,391.50 L751.45,391.50 L772.76,391.50 L793.22,391.50 L813.67,391.50 L834.13,391.50 L854.59,391.50 L875.04,391.50 L895.50,391.50 L895.50,391.50 Z" fill="#a61120" fill-opacity="0.6" stroke="none"/><path d="M260.50,391.50 L280.96,391.50 L301.41,391.50 L321.87,391.50 L342.33,391.50 L362.78,391.50 L383.24,391.50 L403.69,391.50 L424.15,391.50 L444.61,391.50 L465.06,391.50 L485.52,391.50 L505.98,391.50 L526.43,391.50 L546.89,391.50 L567.35,391.50 L587.80,391.50 L608.26,391.50 L628.71,391.50 L649.17,391.50 L669.63,391.50 L690.08,391.50 L710.54,391.50 L731.00,391.50 L751.45,391.50 L772.76,391.50 L793.22,391.50 L813.67,391.50 L834.13,391.50 L854.59,391.50 L875.04,391.50 L895.50,391.50" fill="none" stroke="#7a1a22" stroke-opacity="0.9" stroke-width="1.2" stroke-linejoin="miter" stroke-miterlimit="30"/><path d="M260.50,391.50 L260.50,391.46 L280.96,391.46 L301.41,391.45 L321.87,391.46 L342.33,391.46 L362.78,391.45 L383.24,391.46 L403.69,391.48 L424.15,391.48 L444.61,391.46 L465.06,391.48 L485.52,391.48 L505.98,391.46 L526.43,391.48 L546.89,391.46 L567.35,391.48 L587.80,391.48 L608.26,391.48 L628.71,391.46 L649.17,391.48 L669.63,391.48 L690.08,391.48 L710.54,391.48 L731.00,391.48 L751.45,391.48 L772.76,391.48 L793.22,391.46 L813.67,391.44 L834.13,391.46 L854.59,391.46 L875.04,391.48 L895.50,391.50 L895.50,391.50 Z" fill="#ff8809" fill-opacity="0.6" stroke="none"/><path d="M260.50,391.46 L280.96,391.46 L301.41,391.45 L321.87,391.46 L342.33,391.46 L362.78,391.45 L383.24,391.46 L403.69,391.48 L424.15,391.48 L444.61,391.46 L465.06,391.48 L485.52,391.48 L505.98,391.46 L526.43,391.48 L546.89,391.46 L567.35,391.48 L587.80,391.48 L608.26,391.48 L628.71,391.46 L649.17,391.48 L669.63,391.48 L690.08,391.48 L710.54,391.48 L731.00,391.48 L751.45,391.48 L772.76,391.48 L793.22,391.46 L813.67,391.44 L834.13,391.46 L854.59,391.46 L875.04,391.48 L895.50,391.50" fill="none" stroke="#c06a10" stroke-opacity="0.9" stroke-width="1.2" stroke-linejoin="miter" stroke-miterlimit="30"/><path d="M260.5,173V396M256,391.5H896M256,391.5H260M256,367.5H260M256,343.5H260M256,318.5H260M256,294.5H260M256,270.5H260M256,246.5H260M256,222.5H260M256,197.5H260M256,173.5H260M262.5,392V396M282.5,392V396M303.5,392V396M323.5,392V396M344.5,392V396M364.5,392V396M385.5,392V396M405.5,392V396M426.5,392V396M446.5,392V396M467.5,392V396M487.5,392V396M508.5,392V396M528.5,392V396M548.5,392V396M569.5,392V396M589.5,392V396M610.5,392V396M630.5,392V396M651.5,392V396M671.5,392V396M692.5,392V396M712.5,392V396M733.5,392V396M753.5,392V396M775.5,392V396M795.5,392V396M816.5,392V396M836.5,392V396M857.5,392V396M877.5,392V396M895.5,392V396" stroke="#000" stroke-width="1" fill="none"/><g font-family='"Liberation Sans", sans-serif' font-size="13" fill="#222"><text x="238.6" y="395.0" text-anchor="middle">0</text><text x="240.4" y="371.0" text-anchor="middle">2 k</text><text x="240.4" y="347.0" text-anchor="middle">4 k</text><text x="240.4" y="322.0" text-anchor="middle">6 k</text><text x="240.4" y="298.0" text-anchor="middle">8 k</text><text x="240.4" y="274.0" text-anchor="middle">10 k</text><text x="240.4" y="250.0" text-anchor="middle">12 k</text><text x="240.4" y="226.0" text-anchor="middle">14 k</text><text x="240.4" y="201.0" text-anchor="middle">16 k</text><text x="240.4" y="177.0" text-anchor="middle">18 k</text><text x="261.7" y="412.0" text-anchor="middle">2020-10-01</text><text x="346.0" y="412.0" text-anchor="middle">2020-10-05</text><text x="428.0" y="412.0" text-anchor="middle">2020-10-09</text><text x="510.0" y="412.0" text-anchor="middle">2020-10-13</text><text x="591.0" y="412.0" text-anchor="middle">2020-10-17</text><text x="673.0" y="412.0" text-anchor="middle">2020-10-21</text><text x="755.0" y="412.0" text-anchor="middle">2020-10-25</text><text x="838.0" y="412.0" text-anchor="middle">2020-10-29</text></g></svg><svg width="1920" height="1080" style="position:absolute;left:0px;top:0px;overflow:visible"><path d="M261,843.5H896M261,806.5H896M261,770.5H896M261,734.5H896M261,697.5H896M261,661.5H896M282.5,661V879M303.5,661V879M323.5,661V879M344.5,661V879M364.5,661V879M385.5,661V879M405.5,661V879M426.5,661V879M446.5,661V879M467.5,661V879M487.5,661V879M508.5,661V879M528.5,661V879M548.5,661V879M569.5,661V879M589.5,661V879M610.5,661V879M630.5,661V879M651.5,661V879M671.5,661V879M692.5,661V879M712.5,661V879M733.5,661V879M753.5,661V879M775.5,661V879M795.5,661V879M816.5,661V879M836.5,661V879M857.5,661V879M877.5,661V879M895.5,661V879" stroke="#dddddd" stroke-width="1" fill="none"/><path d="M260.50,879.50 L260.50,747.97 L280.96,774.86 L301.41,819.19 L321.87,838.81 L342.33,763.23 L362.78,775.59 L383.24,755.97 L403.69,786.49 L424.15,795.93 L444.61,835.17 L465.06,840.99 L485.52,795.93 L505.98,777.77 L526.43,754.51 L546.89,734.17 L567.35,774.13 L587.80,835.17 L608.26,843.17 L628.71,719.63 L649.17,771.95 L669.63,779.22 L690.08,722.54 L710.54,784.31 L731.00,845.35 L751.45,835.90 L772.76,830.81 L793.22,753.06 L813.67,710.91 L834.13,669.49 L854.59,723.27 L875.04,801.02 L895.50,879.50 L895.50,879.50 Z" fill="#94ae0a" fill-opacity="0.6" stroke="none"/><path d="M260.50,747.97 L280.96,774.86 L301.41,819.19 L321.87,838.81 L342.33,763.23 L362.78,775.59 L383.24,755.97 L403.69,786.49 L424.15,795.93 L444.61,835.17 L465.06,840.99 L485.52,795.93 L505.98,777.77 L526.43,754.51 L546.89,734.17 L567.35,774.13 L587.80,835.17 L608.26,843.17 L628.71,719.63 L649.17,771.95 L669.63,779.22 L690.08,722.54 L710.54,784.31 L731.00,845.35 L751.45,835.90 L772.76,830.81 L793.22,753.06 L813.67,710.91 L834.13,669.49 L854.59,723.27 L875.04,801.02 L895.50,879.50" fill="none" stroke="#7b9430" stroke-opacity="0.9" stroke-width="1.2" stroke-linejoin="miter" stroke-miterlimit="30"/><path d="M260.50,879.50 L260.50,879.50 L280.96,879.50 L301.41,879.50 L321.87,879.50 L342.33,879.50 L362.78,879.50 L383.24,879.50 L403.69,879.50 L424.15,879.50 L444.61,879.50 L465.06,879.50 L485.52,879.50 L505.98,879.50 L526.43,879.50 L546.89,879.50 L567.35,879.50 L587.80,879.50 L608.26,879.50 L628.71,879.50 L649.17,879.50 L669.63,879.50 L690.08,879.50 L710.54,879.50 L731.00,879.50 L751.45,879.50 L772.76,879.50 L793.22,879.50 L813.67,879.50 L834.13,879.50 L854.59,879.50 L875.04,879.50 L895.50,879.50 L895.50,879.50 Z" fill="#115fa6" fill-opacity="0.6" stroke="none"/><path d="M260.50,879.50 L280.96,879.50 L301.41,879.50 L321.87,879.50 L342.33,879.50 L362.78,879.50 L383.24,879.50 L403.69,879.50 L424.15,879.50 L444.61,879.50 L465.06,879.50 L485.52,879.50 L505.98,879.50 L526.43,879.50 L546.89,879.50 L567.35,879.50 L587.80,879.50 L608.26,879.50 L628.71,879.50 L649.17,879.50 L669.63,879.50 L690.08,879.50 L710.54,879.50 L731.00,879.50 L751.45,879.50 L772.76,879.50 L793.22,879.50 L813.67,879.50 L834.13,879.50 L854.59,879.50 L875.04,879.50 L895.50,879.50" fill="none" stroke="#265a76" stroke-opacity="0.9" stroke-width="1.2" stroke-linejoin="miter" stroke-miterlimit="30"/><path d="M260.50,879.50 L260.50,877.32 L280.96,877.32 L301.41,876.59 L321.87,877.32 L342.33,877.32 L362.78,876.59 L383.24,877.32 L403.69,878.05 L424.15,878.05 L444.61,877.32 L465.06,878.05 L485.52,878.05 L505.98,877.32 L526.43,878.05 L546.89,877.32 L567.35,878.05 L587.80,878.05 L608.26,878.05 L628.71,877.32 L649.17,878.05 L669.63,878.05 L690.08,878.05 L710.54,878.05 L731.00,878.05 L751.45,878.05 L772.76,878.05 L793.22,877.32 L813.67,875.87 L834.13,877.32 L854.59,877.32 L875.04,878.05 L895.50,879.50 L895.50,879.50 Z" fill="#a61120" fill-opacity="0.6" stroke="none"/><path d="M260.50,877.32 L280.96,877.32 L301.41,876.59 L321.87,877.32 L342.33,877.32 L362.78,876.59 L383.24,877.32 L403.69,878.05 L424.15,878.05 L444.61,877.32 L465.06,878.05 L485.52,878.05 L505.98,877.32 L526.43,878.05 L546.89,877.32 L567.35,878.05 L587.80,878.05 L608.26,878.05 L628.71,877.32 L649.17,878.05 L669.63,878.05 L690.08,878.05 L710.54,878.05 L731.00,878.05 L751.45,878.05 L772.76,878.05 L793.22,877.32 L813.67,875.87 L834.13,877.32 L854.59,877.32 L875.04,878.05 L895.50,879.50" fill="none" stroke="#7a1a22" stroke-opacity="0.9" stroke-width="1.2" stroke-linejoin="miter" stroke-miterlimit="30"/><path d="M260.5,661V884M256,879.5H896M256,879.5H260M256,843.5H260M256,806.5H260M256,770.5H260M256,734.5H260M256,697.5H260M256,661.5H260M262.5,880V884M282.5,880V884M303.5,880V884M323.5,880V884M344.5,880V884M364.5,880V884M385.5,880V884M405.5,880V884M426.5,880V884M446.5,880V884M467.5,880V884M487.5,880V884M508.5,880V884M528.5,880V884M548.5,880V884M569.5,880V884M589.5,880V884M610.5,880V884M630.5,880V884M651.5,880V884M671.5,880V884M692.5,880V884M712.5,880V884M733.5,880V884M753.5,880V884M775.5,880V884M795.5,880V884M816.5,880V884M836.5,880V884M857.5,880V884M877.5,880V884M895.5,880V884" stroke="#000" stroke-width="1" fill="none"/><g font-family='"Liberation Sans", sans-serif' font-size="13" fill="#222"><text x="238.6" y="883.0" text-anchor="middle">0</text><text x="238.6" y="847.0" text-anchor="middle">50</text><text x="238.6" y="810.0" text-anchor="middle">100</text><text x="238.6" y="774.0" text-anchor="middle">150</text><text x="238.6" y="738.0" text-anchor="middle">200</text><text x="238.6" y="701.0" text-anchor="middle">250</text><text x="238.6" y="665.0" text-anchor="middle">300</text><text x="261.7" y="900.0" text-anchor="middle">2020-10-01</text><text x="346.0" y="900.0" text-anchor="middle">2020-10-05</text><text x="428.0" y="900.0" text-anchor="middle">2020-10-09</text><text x="510.0" y="900.0" text-anchor="middle">2020-10-13</text><text x="591.0" y="900.0" text-anchor="middle">2020-10-17</text><text x="673.0" y="900.0" text-anchor="middle">2020-10-21</text><text x="755.0" y="900.0" text-anchor="middle">2020-10-25</text><text x="838.0" y="900.0" text-anchor="middle">2020-10-29</text></g></svg></body></html>
